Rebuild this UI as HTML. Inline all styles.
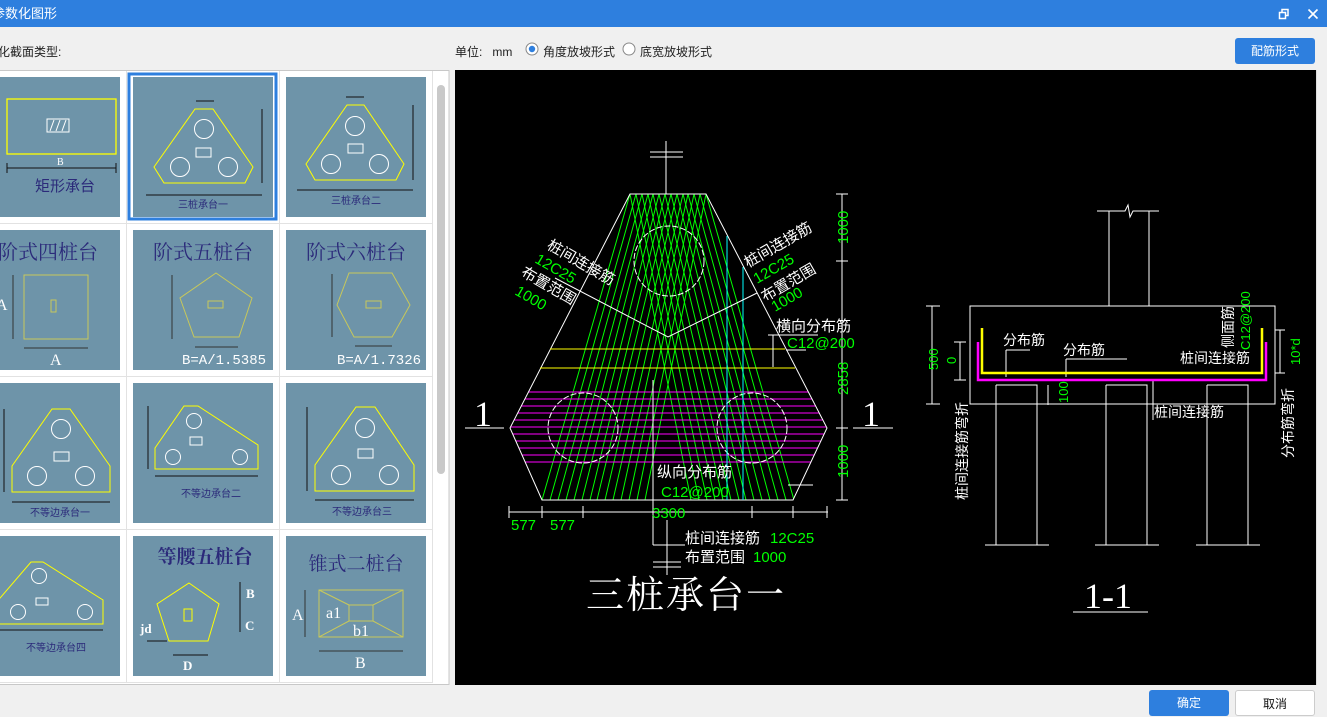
<!DOCTYPE html>
<html><head><meta charset="utf-8"><style>
*{margin:0;padding:0;box-sizing:border-box}
body{width:1327px;height:714px;overflow:hidden;background:#f0f0f0;font-family:"Liberation Sans","Noto Sans CJK SC",sans-serif;position:relative}
.title{position:absolute;left:0;top:0;width:1327px;height:27px;background:#2e7fde;color:#fff;font-size:13px;line-height:27px}
.abs{position:absolute}
.btn{position:absolute;border-radius:3px;font-size:12px;text-align:center}
</style></head><body>
<div class="title"><span class="abs" style="left:-8px;top:0">参数化图形</span>
<svg class="abs" style="left:1278px;top:8px" width="12" height="12"><rect x="1.5" y="4.5" width="6" height="6" fill="none" stroke="#fff" stroke-width="1.5"/><path d="M4 4V1.5h6v6H8" fill="none" stroke="#fff" stroke-width="1.5"/></svg>
<svg class="abs" style="left:1307px;top:8px" width="12" height="12"><path d="M1.5 1.5l9 9M10.5 1.5l-9 9" stroke="#fff" stroke-width="1.6"/></svg>
</div>
<div class="abs" style="left:-2px;top:43px;font-size:12px;color:#222">化截面类型:</div>
<div class="abs" style="left:455px;top:43px;font-size:12px;color:#222">单位:&nbsp;&nbsp;&nbsp;mm</div>
<svg class="abs" style="left:525px;top:42px" width="14" height="14"><circle cx="7" cy="7" r="6" fill="#fff" stroke="#888"/><circle cx="7" cy="7" r="3.2" fill="#2e7fde"/></svg>
<div class="abs" style="left:543px;top:43px;font-size:12px;color:#222">角度放坡形式</div>
<svg class="abs" style="left:622px;top:42px" width="14" height="14"><circle cx="7" cy="7" r="6" fill="#fff" stroke="#888"/></svg>
<div class="abs" style="left:640px;top:43px;font-size:12px;color:#222">底宽放坡形式</div>
<div class="btn" style="left:1235px;top:38px;width:80px;height:26px;line-height:26px;background:#2e7fde;color:#fff">配筋形式</div>
<div class="btn" style="left:1149px;top:690px;width:80px;height:26px;line-height:26px;background:#2e7fde;color:#fff">确定</div>
<div class="btn" style="left:1235px;top:690px;width:80px;height:26px;line-height:26px;background:#fff;border:1px solid #ccc;color:#111">取消</div>
<div class="abs" style="left:1316px;top:70px;width:1px;height:615px;background:#ddd"></div>

<!-- left panel -->
<svg class="abs" style="left:0;top:0" width="452" height="690" font-family="Liberation Sans,Noto Sans CJK SC,sans-serif">
<rect x="-1" y="70.5" width="450" height="614" fill="#fff" stroke="#c8c8c8"/>
<g fill="#6e94a9">
<rect x="-20" y="77" width="140" height="140"/><rect x="133" y="77" width="140" height="140"/><rect x="286" y="77" width="140" height="140"/>
<rect x="-20" y="230" width="140" height="140"/><rect x="133" y="230" width="140" height="140"/><rect x="286" y="230" width="140" height="140"/>
<rect x="-20" y="383" width="140" height="140"/><rect x="133" y="383" width="140" height="140"/><rect x="286" y="383" width="140" height="140"/>
<rect x="-20" y="536" width="140" height="140"/><rect x="133" y="536" width="140" height="140"/><rect x="286" y="536" width="140" height="140"/>
</g>
<g stroke="#e2e2e2"><path d="M126.5 71v612M279.5 71v612M432.5 71v612M0 223.5h432M0 376.5h432M0 529.5h432M0 682.5h432"/></g>
<rect x="129" y="74" width="147" height="145" fill="none" stroke="#2e7fde" stroke-width="3"/>
<rect x="437" y="85" width="8" height="389" rx="4" fill="#c9c9c9"/>
<rect x="7" y="99" width="109" height="55" fill="none" stroke="#ffff00" stroke-width="1.3"/>
<rect x="47" y="119" width="22" height="13" fill="none" stroke="#fff"/><path d="M50 131l4-11M56 131l4-11M62 131l4-11" stroke="#fff"/>
<path d="M7 168h109M7 163v10M116 163v10" stroke="#111"/>
<text x="57" y="165" font-size="10" fill="#fff" font-family="Liberation Serif">B</text>
<text x="35" y="191" font-size="15" fill="#2b2a7a">矩形承台</text>
<polygon points="195,109 213,109 253,167 245,183 164,183 154,167" fill="none" stroke="#ffff00"/>
<g fill="none" stroke="#fff"><circle cx="204" cy="129" r="9.5"/><circle cx="180" cy="167" r="9.5"/><circle cx="228" cy="167" r="9.5"/><rect x="196" y="148" width="15" height="9"/></g>
<path d="M146 195h116M262 109v74M196 101h18" stroke="#111"/>
<text x="203" y="208" font-size="10" fill="#2b2a7a" text-anchor="middle">三桩承台一</text>
<polygon points="347,105 364,105 404,164 396,180 315,180 306,164" fill="none" stroke="#ffff00"/>
<g fill="none" stroke="#fff"><circle cx="355" cy="126" r="9.5"/><circle cx="331" cy="164" r="9.5"/><circle cx="379" cy="164" r="9.5"/><rect x="348" y="144" width="15" height="9"/></g>
<path d="M297 190h116M413 105v75M346 97h18" stroke="#111"/>
<text x="356" y="204" font-size="10" fill="#2b2a7a" text-anchor="middle">三桩承台二</text>
<g font-family="Noto Serif CJK SC,serif" font-size="20" fill="#2b2a7a" text-anchor="middle">
<text x="48" y="259">阶式四桩台</text><text x="203" y="259">阶式五桩台</text><text x="356" y="259">阶式六桩台</text></g>
<g fill="none" stroke="#c8c85a">
<rect x="24" y="275" width="64" height="64"/><rect x="51" y="300" width="5" height="12"/>
<polygon points="216,273 252,298 239,337 194,337 180,298"/><rect x="208" y="301" width="15" height="7"/>
<polygon points="349,273 392,273 410,305 392,337 354,337 337,305"/><rect x="366" y="301" width="15" height="7"/>
</g>
<g stroke="#333"><path d="M13 275v64M24 348h64M172 275v64M195 347h43M332 274v63M355 346h37"/></g>
<g fill="#fff" font-family="Liberation Serif" font-size="16"><text x="50" y="365">A</text><text x="-4" y="310">A</text></g>
<g fill="#fff" font-family="Liberation Mono" font-size="14"><text x="182" y="364">B=A/1.5385</text><text x="337" y="364">B=A/1.7326</text></g>
<g fill="none" stroke="#ffff00">
<polygon points="52,409 70,409 110,466 110,492 12,492 12,466"/>
<polygon points="184,406 198,406 258,445 258,469 155,469 155,448"/>
<polygon points="356,407 375,407 414,465 414,491 315,491 315,465"/>
<polygon points="31,562 43,562 103,600 103,624 -5,624 -5,604"/>
</g>
<g fill="none" stroke="#fff">
<circle cx="61" cy="429" r="9.5"/><circle cx="37" cy="476" r="9.5"/><circle cx="85" cy="476" r="9.5"/><rect x="54" y="452" width="15" height="9"/>
<circle cx="194" cy="421" r="7.5"/><circle cx="173" cy="457" r="7.5"/><circle cx="240" cy="457" r="7.5"/><rect x="190" y="437" width="12" height="8"/>
<circle cx="365" cy="428" r="9.5"/><circle cx="341" cy="475" r="9.5"/><circle cx="389" cy="475" r="9.5"/><rect x="358" y="449" width="15" height="9"/>
<circle cx="39" cy="576" r="7.5"/><circle cx="18" cy="612" r="7.5"/><circle cx="85" cy="612" r="7.5"/><rect x="36" y="598" width="12" height="7"/>
</g>
<g stroke="#111"><path d="M12 502h98M4 409v83M155 476h103M148 406v63M315 500h99M307 407v84M0 630h103"/></g>
<g font-size="10" fill="#2b2a7a" text-anchor="middle"><text x="60" y="516">不等边承台一</text><text x="211" y="497">不等边承台二</text><text x="362" y="515">不等边承台三</text><text x="56" y="651">不等边承台四</text></g>
<text x="205" y="563" font-family="Noto Serif CJK SC,serif" font-weight="bold" font-size="19" fill="#2b2a7a" text-anchor="middle">等腰五桩台</text>
<polygon points="189,583 219,604 208,641 169,641 157,604" fill="none" stroke="#ffff00"/>
<rect x="184" y="609" width="8" height="12" fill="none" stroke="#ffff00"/>
<path d="M173 655h35M240 582v50M147 641h20" stroke="#111"/>
<g fill="#fff" font-family="Liberation Serif" font-weight="bold" font-size="13"><text x="246" y="598">B</text><text x="245" y="630">C</text><text x="183" y="670">D</text><text x="140" y="633">jd</text></g>
<text x="356" y="570" font-family="Noto Serif CJK SC,serif" font-size="19" fill="#2b2a7a" text-anchor="middle">锥式二桩台</text>
<g fill="none" stroke="#c8c85a"><rect x="319" y="590" width="84" height="47"/><rect x="349" y="605" width="24" height="16"/><path d="M319 590l30 15M403 590l-30 15M319 637l30-16M403 637l-30-16"/></g>
<path d="M305 590v47M319 651h84" stroke="#333"/>
<g fill="#fff" font-family="Liberation Serif" font-size="16"><text x="292" y="620">A</text><text x="326" y="618">a1</text><text x="353" y="636">b1</text><text x="355" y="668">B</text></g>
</svg>

<!-- CAD canvas -->
<svg class="abs" style="left:455px;top:70px" width="861" height="615" font-family="Liberation Sans,Noto Sans CJK SC,sans-serif">
<rect width="861" height="615" fill="#000"/>
<g transform="translate(-455,-70)">
<defs><clipPath id="hx"><polygon points="630,194 706,194 827,428 793,500 542,500 510,428"/></clipPath></defs>
<g clip-path="url(#hx)" stroke="#00ff00" stroke-width="1">
<path d="M630 194L542 500M636 194L550 500M642 194L558 500M648 194L566 500M653 194L574 500M659 194L582 500M665 194L590 500M671 194L597 500M677 194L605 500M683 194L613 500M688 194L621 500M694 194L629 500M700 194L637 500M706 194L645 500"/>
<path d="M706 194L794 500M700 194L786 500M694 194L778 500M688 194L770 500M683 194L762 500M677 194L754 500M671 194L746 500M665 194L739 500M659 194L731 500M653 194L723 500M648 194L715 500M642 194L707 500M636 194L699 500M630 194L691 500"/>
<g stroke="#ff00ff"><path d="M500 392h340M500 399h340M500 406h340M500 413h340M500 420h340M500 427h340M500 434h340M500 441h340M500 448h340M500 455h340M500 462h340"/></g>
</g>
<polygon points="630,194 706,194 827,428 793,500 542,500 510,428" fill="none" stroke="#fff"/>
<g fill="none" stroke="#fff" stroke-dasharray="6 2"><circle cx="669" cy="261" r="35"/><circle cx="583" cy="428" r="35"/><circle cx="752" cy="428" r="35"/></g>
<path d="M550 349h235M540 368h255" stroke="#ffff00"/>
<path d="M727 236v264M743 267v233" stroke="#00ffff"/>
<g stroke="#fff" fill="none">
<path d="M555 278l113 59l89-44"/>
<path d="M666 141v53M650 152h33M650 157h33"/>
<path d="M653 380v165M667 520v55M653 545h32M653 562h28M653 567h28"/>
<path d="M465 428h39M853 428h40"/>
<path d="M842 194v306M836 194h12M836 261h12M836 428h12M836 500h12"/>
<path d="M509 512h319M509 506v12M542 506v12M583 506v12M752 506v12M793 506v12M827 506v12"/>
<path d="M768 335h50M773 335v32M786 350h20"/>
<path d="M788 485h25"/>
</g>
<g fill="#00ff00" font-size="15">
<text transform="translate(848,244) rotate(-90)">1000</text>
<text transform="translate(848,395) rotate(-90)">2858</text>
<text transform="translate(848,478) rotate(-90)">1000</text>
<text x="511" y="530">577</text><text x="550" y="530">577</text><text x="652" y="518">3300</text>
<text x="787" y="348">C12@200</text><text x="661" y="497">C12@200</text>
<text x="770" y="543">12C25</text><text x="753" y="562">1000</text>
</g>
<g fill="#fff" font-size="15">
<text x="776" y="331">横向分布筋</text><text x="657" y="477">纵向分布筋</text>
<text x="685" y="543">桩间连接筋</text><text x="685" y="562">布置范围</text>
</g>
<g font-size="15">
<text transform="translate(546,248) rotate(30)" fill="#fff">桩间连接筋</text>
<text transform="translate(534,262) rotate(30)" fill="#00ff00">12C25</text>
<text transform="translate(520,275) rotate(30)" fill="#fff">布置范围</text>
<text transform="translate(514,294) rotate(30)" fill="#00ff00">1000</text>
<text transform="translate(748,268) rotate(-30)" fill="#fff">桩间连接筋</text>
<text transform="translate(757,284) rotate(-30)" fill="#00ff00">12C25</text>
<text transform="translate(765,302) rotate(-30)" fill="#fff">布置范围</text>
<text transform="translate(775,312) rotate(-30)" fill="#00ff00">1000</text>
</g>
<text x="474" y="426" font-family="Liberation Serif" font-size="36" fill="#fff">1</text>
<text x="862" y="426" font-family="Liberation Serif" font-size="36" fill="#fff">1</text>
<text x="586" y="608" font-family="Noto Serif CJK SC,serif" font-size="38" fill="#fff" letter-spacing="2">三桩承台一</text>
<g stroke="#fff" fill="none">
<rect x="970" y="306" width="305" height="98"/>
<path d="M1109 306v-95M1149 306v-95M1097 211h28l3-6l2 12l3-6h26"/>
<path d="M996 385h41v160M996 385v160M1106 385h41v160M1106 385v160M1207 385h41v160M1207 385v160"/>
<path d="M985 545h64M1095 545h64M1196 545h64"/>
<path d="M932 306v98M926 306h14M926 404h14M960 342v38M954 342h12M954 380h12M1048 385v20M1280 330v43M1275 330h10M1275 373h10"/>
<path d="M1006 350h24M1006 350v27M1066 359h61M1066 359v18M1153 420v-40h34"/>
</g>
<path d="M982 328v45h280v-45" fill="none" stroke="#ffff00" stroke-width="2.5"/>
<path d="M978 342v38h288v-38" fill="none" stroke="#ff00ff" stroke-width="2.5"/>
<g fill="#fff" font-size="14">
<text x="1003" y="345">分布筋</text><text x="1063" y="355">分布筋</text><text x="1180" y="363">桩间连接筋</text><text x="1154" y="417">桩间连接筋</text>
<text transform="translate(967,500) rotate(-90)">桩间连接筋弯折</text>
<text transform="translate(1293,458) rotate(-90)">分布筋弯折</text>
<text transform="translate(1233,348) rotate(-90)">侧面筋</text>
</g>
<g fill="#00ff00" font-size="13">
<text transform="translate(938,370) rotate(-90)">500</text>
<text transform="translate(956,364) rotate(-90)">0</text>
<text transform="translate(1068,403) rotate(-90)">100</text>
<text transform="translate(1250,350) rotate(-90)">C12@200</text>
<text transform="translate(1300,365) rotate(-90)">10*d</text>
</g>
<text x="1084" y="608" font-family="Liberation Serif" font-size="36" fill="#fff">1-1</text>
<path d="M1073 612h75" stroke="#fff"/>
</g>
</svg>
</body></html>
